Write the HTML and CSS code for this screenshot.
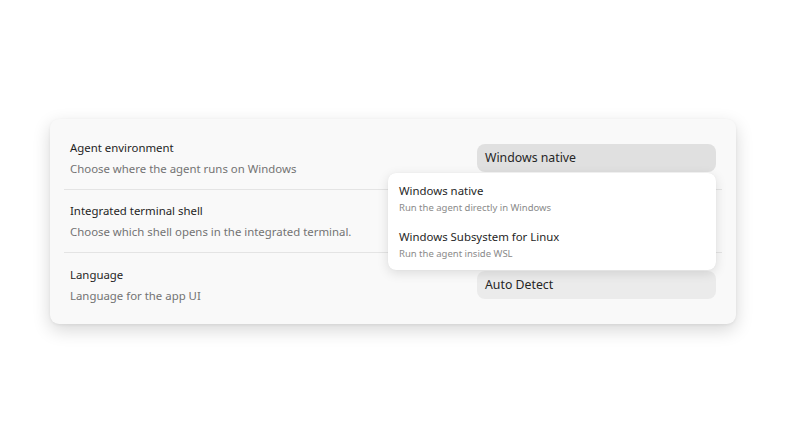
FILE: index.html
```html
<!DOCTYPE html>
<html>
<head>
<meta charset="utf-8">
<link rel="stylesheet" href="styles.css">
</head>
<body>
<div class="card">
  <div class="row">
    <div class="info">
      <div class="title">Agent environment</div>
      <div class="desc">Choose where the agent runs on Windows</div>
    </div>
    <div class="control">
      <div class="select active">Windows native</div>
      <div class="menu">
        <div class="item">
          <div class="item-title">Windows native</div>
          <div class="item-sub">Run the agent directly in Windows</div>
        </div>
        <div class="item">
          <div class="item-title">Windows Subsystem for Linux</div>
          <div class="item-sub">Run the agent inside WSL</div>
        </div>
      </div>
    </div>
  </div>
  <div class="row">
    <div class="info">
      <div class="title">Integrated terminal shell</div>
      <div class="desc">Choose which shell opens in the integrated terminal.</div>
    </div>
    <div class="control">
      <div class="select"></div>
    </div>
  </div>
  <div class="row">
    <div class="info">
      <div class="title">Language</div>
      <div class="desc">Language for the app UI</div>
    </div>
    <div class="control">
      <div class="select">Auto Detect</div>
    </div>
  </div>
</div>
</body>
</html>
```

FILE: styles.css
```css
* { box-sizing: border-box; }
html, body { margin: 0; padding: 0; background: #ffffff; }
body {
  font-family: "Noto Sans", "Open Sans", sans-serif;
  color: #1f1f1f;
  width: 786px;
  height: 442px;
  overflow: hidden;
}
.card {
  margin: 119px 0 0 50px;
  width: 686px;
  height: 205px;
  background: #f9f9f9;
  border-radius: 9px;
  box-shadow: 0 6px 18px rgba(0,0,0,0.16), 0 1px 3px rgba(0,0,0,0.06);
  padding: 8px 14px 8px;
}
.row {
  display: flex;
  align-items: center;
  justify-content: space-between;
  height: 63px;
  padding: 0 6px;
  border-bottom: 1px solid #e4e4e4;
}
.row:last-child { border-bottom: none; }
.info { display: flex; flex-direction: column; gap: 5px; padding-top: 1px; }
.title { font-size: 11.4px; line-height: 16px; color: #1f1f1f; }
.desc { font-size: 11.4px; line-height: 16px; color: #737373; }
.control { position: relative; width: 239px; }
.select {
  height: 28px;
  border-radius: 8px;
  background: #ebebeb;
  font-size: 12.3px;
  line-height: 28px;
  padding-left: 8px;
  color: #262626;
}
.select.active { background: #e0e0e0; }
.menu {
  position: absolute;
  top: 29px;
  right: 0;
  width: 328px;
  background: #ffffff;
  border-radius: 8px;
  box-shadow: 0 3px 12px rgba(0,0,0,0.12), 0 0 1px rgba(0,0,0,0.08);
  padding: 3px 0 2px;
  z-index: 2;
}
.item { padding: 7px 11px; }
.item-title { font-size: 11.4px; line-height: 16px; color: #262626; }
.item-sub { font-size: 9.5px; line-height: 14px; color: #8a8a8a; margin-top: 2px; }
```
